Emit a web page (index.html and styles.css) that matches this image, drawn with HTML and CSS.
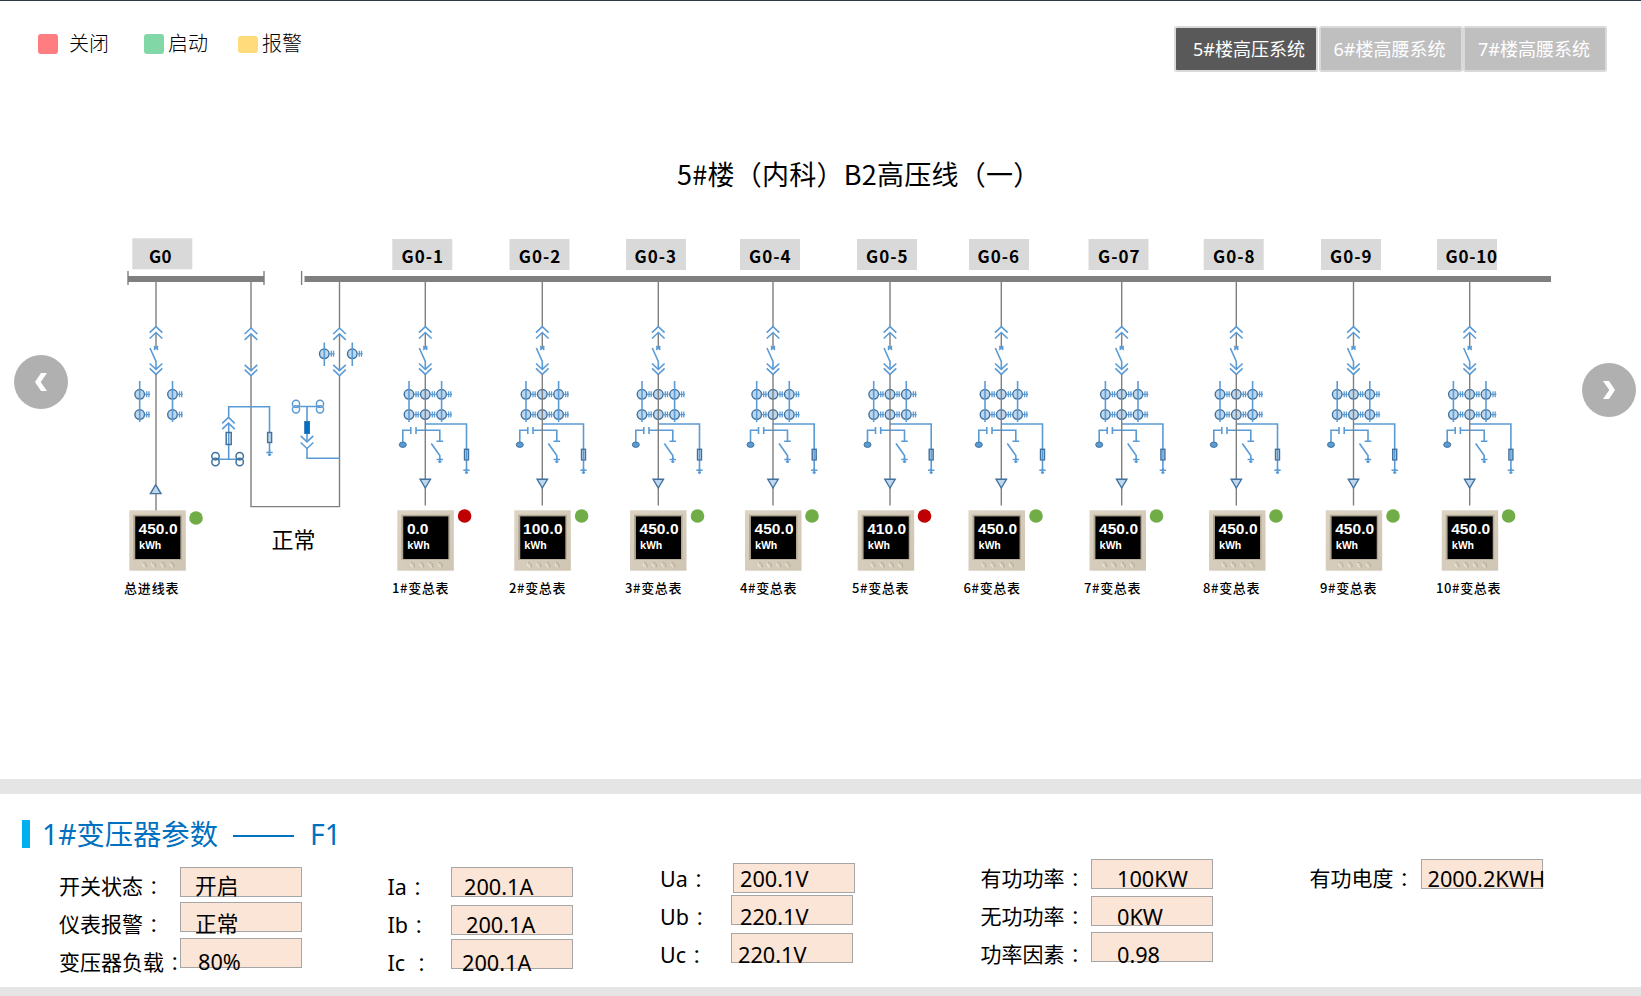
FILE: index.html
```html
<!DOCTYPE html>
<html lang="zh-CN">
<head>
<meta charset="utf-8">
<title>高压系统</title>
<link rel="stylesheet" href="styles.css">
</head>
<body>
<header class="topbar">
  <ul class="legend">
    <li class="legend-item off"><i class="swatch"></i><span>关闭</span></li>
    <li class="legend-item on"><i class="swatch"></i><span>启动</span></li>
    <li class="legend-item alarm"><i class="swatch"></i><span>报警</span></li>
  </ul>
  <nav class="tabs">
    <a class="tab active">5#楼高压系统</a>
    <a class="tab">6#楼高腰系统</a>
    <a class="tab">7#楼高腰系统</a>
  </nav>
</header>

<h1 class="title">5#楼（内科）B2高压线（一）</h1>

<main class="stage">
  <svg class="diagram" viewBox="0 212 1641 567" width="1641" height="567">
    <defs>
      <path id="up" class="b" d="M-6.3 332.7L0 326.7L6.3 332.7M-6.3 338.5L0 332.5L6.3 338.5"/>
      <path id="down" class="b" d="M-6.3 363.5L0 369.3L6.3 363.5M-6.3 368.3L0 374.3L6.3 368.3"/>
      <g id="ct">
        <circle class="f" r="4.8"/>
        <path class="b thin" d="M5 0H10.4M7 -3V3M9.2 -3V3"/>
      </g>
      <g id="ctline">
        <use href="#ct" y="394.3"/><use href="#ct" y="414.6"/>
        <path class="b" d="M0 381V422"/>
      </g>
      <g id="head">
        <path class="g" d="M0 282V327M0 333V347"/>
        <use href="#up"/>
        <path class="b thin" d="M-2 346L2 350M2 346L-2 350M-2.2 348H2.2"/>
        <path class="b" d="M-6 348L0 361.5V369"/>
        <use href="#down"/>
      </g>
      <g id="ground"><path class="b" d="M-3.2 0H3.2M-1.6 2.2H1.6M0 -2V3.6"/></g>
      <g id="feeder">
        <use href="#head"/>
        <use href="#ctline" x="-16.3"/>
        <use href="#ctline" x="16.3"/>
        <use href="#ct" y="394.3"/><use href="#ct" y="414.6"/>
        <path class="b" d="M0 424H41.2V470M-22.5 442V430.3H-14.5M-14.5 427V434M-9.3 427V434M-9.3 430.3H14.5V441.3M11.2 441.3H17.8M6 443.5L14.5 455.5V460"/>
        <ellipse class="dotb" cx="-22.5" cy="444.7" rx="3.5" ry="2.7"/>
        <rect class="f" x="39.2" y="449.3" width="4" height="10.6"/>
        <path class="b thin" d="M41.2 450V460"/>
        <use href="#ground" x="14.5" y="459.5"/>
        <use href="#ground" x="41.2" y="470.3"/>
        <path class="g" d="M0 374V505.5"/>
        <path class="f" d="M-5.2 479.3H5.2L0 488Z"/>
      </g>
      <linearGradient id="casing" x1="0" y1="0" x2="1" y2="1">
        <stop offset="0" stop-color="#dcd3c3"/><stop offset="1" stop-color="#cfc5b3"/>
      </linearGradient>
      <g id="meter">
        <rect x="0" y="510.3" width="56.5" height="60.4" fill="url(#casing)"/>
        <path d="M4 514.7H52.5V559.7H4Z" fill="#b3a894"/>
        <path d="M5.6 516H51V559H5.6Z" fill="#8a857c"/>
        <rect x="6" y="516.5" width="45" height="42.5" fill="#000"/>
        <path class="key" d="M14 562.5c3-.5 4 4 2.500 5M23.200 562.500c3-.5 4 4 2.500 5M32.500 562.500c3-.5 4 4 2.500 5M41.700 562.500c3-.5 4 4 2.500 5"/>
        <path class="glint" d="M13 563.500q0 3 3 4M22.200 563.500q0 3 3 4M31.500 563.500q0 3 3 4M40.700 563.500q0 3 3 4"/>
      </g>
    </defs>

    <!-- cabinet plates -->
    <g class="plate">
      <rect x="132.300" y="238.300" width="60" height="31"/>
      <rect x="392.300" y="239" width="60" height="31"/>
      <rect x="509.500" y="239" width="60" height="31"/>
      <rect x="626" y="239" width="60" height="31"/>
      <rect x="740" y="239" width="60" height="31"/>
      <rect x="857" y="239" width="60" height="31"/>
      <rect x="969" y="239" width="60" height="31"/>
      <rect x="1088.500" y="239" width="60" height="31"/>
      <rect x="1203.700" y="239" width="60" height="31"/>
      <rect x="1321" y="239" width="60" height="31"/>
      <rect x="1437" y="239" width="60" height="31"/>
    </g>
    <g class="plate-text">
      <text x="149" y="262.500" textLength="22.500">G0</text>
      <text x="401.500" y="262.500" textLength="41.500">G0-1</text>
      <text x="518.800" y="262.500" textLength="41.500">G0-2</text>
      <text x="634.500" y="262.500" textLength="41.500">G0-3</text>
      <text x="749" y="262.500" textLength="41.500">G0-4</text>
      <text x="866" y="262.500" textLength="41.500">G0-5</text>
      <text x="977.500" y="262.500" textLength="41.500">G0-6</text>
      <text x="1098" y="262.500" textLength="41.500">G-07</text>
      <text x="1213" y="262.500" textLength="41.500">G0-8</text>
      <text x="1330" y="262.500" textLength="41.500">G0-9</text>
      <text x="1445.500" y="262.500" textLength="51.500">G0-10</text>
    </g>

    <!-- busbars -->
    <path class="bus" d="M128 279H264M304.500 279H1551"/>
    <path class="g" d="M128 271V285M264 271V285M301.600 271V285"/>

    <!-- incoming line G0 -->
    <use href="#head" x="156"/>
    <use href="#ctline" x="139.700"/>
    <use href="#ctline" x="172.500"/>
    <path class="f" d="M150.400 493.600H161L155.700 484.600Z"/>
    <path class="g" d="M156 374V484.500M156 493.600V511"/>

    <!-- bus tie loop -->
    <path class="g" d="M251 282V328M251 334V371M251 376V506.600H339.500V376M339.500 371V334M339.500 328V282"/>
    <use href="#up" x="251" y="1.300"/><use href="#down" x="251" y="1.300"/>
    <use href="#up" x="339.500" y="1.300"/><use href="#down" x="339.500" y="1.300"/>
    <use href="#ct" x="324.300" y="353.800"/><use href="#ct" x="352.300" y="353.800"/>
    <path class="b" d="M324.300 342.500V366M352.300 342.500V366"/>

    <path class="b" d="M228.700 417.500V406.700H269.500V452M228.700 423V459.200H216M228.700 459.200H240"/>
    <use href="#up" x="228.500" y="90.700"/>
    <g class="hollow dark">
      <rect x="226.200" y="432.500" width="5" height="12"/>
      <circle cx="215.500" cy="456.200" r="3.700"/><circle cx="215.500" cy="462" r="3.700"/>
      <circle cx="239.700" cy="456.200" r="3.700"/><circle cx="239.700" cy="462" r="3.700"/>
    </g>
    <rect class="f" x="267.600" y="432.500" width="4" height="10"/>
    <use href="#ground" x="269.500" y="452.500"/>

    <path class="b" d="M297 406.500H320M307 406.500V442M307 448V458.300H339.500"/>
    <g class="hollow">
      <circle cx="296" cy="403.800" r="3.600"/><circle cx="296" cy="409.300" r="3.600"/>
      <circle cx="320" cy="403.800" r="3.600"/><circle cx="320" cy="409.300" r="3.600"/>
    </g>
    <rect class="fuse" x="304.700" y="421.500" width="4.800" height="12"/>
    <path class="b" d="M300.700 435.800L307 441.800L313.300 435.800M300.700 442.500L307 448.500L313.300 442.500"/>

    <!-- outgoing feeders -->
    <use href="#feeder" x="425.300"/>
    <use href="#feeder" x="542.300"/>
    <use href="#feeder" x="658.300"/>
    <use href="#feeder" x="773"/>
    <use href="#feeder" x="890"/>
    <use href="#feeder" x="1001.300"/>
    <use href="#feeder" x="1121.700"/>
    <use href="#feeder" x="1236.300"/>
    <use href="#feeder" x="1353.500"/>
    <use href="#feeder" x="1469.700"/>

    <!-- meters -->
    <use href="#meter" x="129.300"/>
    <use href="#meter" x="397.300"/>
    <use href="#meter" x="514.300"/>
    <use href="#meter" x="630"/>
    <use href="#meter" x="745"/>
    <use href="#meter" x="857.700"/>
    <use href="#meter" x="968.500"/>
    <use href="#meter" x="1089.500"/>
    <use href="#meter" x="1209"/>
    <use href="#meter" x="1325.700"/>
    <use href="#meter" x="1441.700"/>
    <g class="reading">
      <text x="138.500" y="534" textLength="39">450.0</text>
      <text x="406.900" y="534" textLength="21.500">0.0</text>
      <text x="523" y="534" textLength="39.500">100.0</text>
      <text x="639.500" y="534" textLength="39">450.0</text>
      <text x="754.500" y="534" textLength="39">450.0</text>
      <text x="867.200" y="534" textLength="39">410.0</text>
      <text x="978" y="534" textLength="39">450.0</text>
      <text x="1099" y="534" textLength="39">450.0</text>
      <text x="1218.500" y="534" textLength="39">450.0</text>
      <text x="1335.200" y="534" textLength="39">450.0</text>
      <text x="1451.200" y="534" textLength="39">450.0</text>
    </g>
    <g class="unit">
      <text x="139" y="549">kWh</text>
      <text x="407.300" y="549">kWh</text>
      <text x="524.300" y="549">kWh</text>
      <text x="640" y="549">kWh</text>
      <text x="755" y="549">kWh</text>
      <text x="867.700" y="549">kWh</text>
      <text x="978.500" y="549">kWh</text>
      <text x="1099.500" y="549">kWh</text>
      <text x="1219" y="549">kWh</text>
      <text x="1335.700" y="549">kWh</text>
      <text x="1451.700" y="549">kWh</text>
    </g>

    <!-- status lamps -->
    <g class="lamp">
      <circle cx="196" cy="518" r="6.800"/>
      <circle class="stop" cx="464.600" cy="516" r="6.800"/>
      <circle cx="581.600" cy="516" r="6.800"/>
      <circle cx="697.500" cy="516" r="6.800"/>
      <circle cx="812" cy="516" r="6.800"/>
      <circle class="stop" cx="924.500" cy="516" r="6.800"/>
      <circle cx="1036" cy="516" r="6.800"/>
      <circle cx="1156.500" cy="516" r="6.800"/>
      <circle cx="1276" cy="516" r="6.800"/>
      <circle cx="1393" cy="516" r="6.800"/>
      <circle cx="1508.600" cy="516" r="6.800"/>
    </g>

    <g class="caption">
      <text x="124" y="593" textLength="54.500">总进线表</text>
      <text x="392" y="593" textLength="56.500">1#变总表</text>
      <text x="509" y="593" textLength="56.500">2#变总表</text>
      <text x="625" y="593" textLength="56.500">3#变总表</text>
      <text x="740" y="593" textLength="56.500">4#变总表</text>
      <text x="852" y="593" textLength="56.500">5#变总表</text>
      <text x="963.500" y="593" textLength="56.500">6#变总表</text>
      <text x="1084" y="593" textLength="56.500">7#变总表</text>
      <text x="1203" y="593" textLength="56.500">8#变总表</text>
      <text x="1320" y="593" textLength="56.500">9#变总表</text>
      <text x="1436" y="593" textLength="64.500">10#变总表</text>
    </g>
    <text class="state" x="271.500" y="548" textLength="44">正常</text>
  </svg>
  <button class="pager prev" aria-label="上一页">
    <svg viewBox="0 0 54 54" width="54" height="54"><path d="M21 27L27 18H33L26.700 27L33 36H27Z"/></svg>
  </button>
  <button class="pager next" aria-label="下一页">
    <svg viewBox="0 0 54 54" width="54" height="54"><path d="M33 27L27 18H21L27.300 27L21 36H27Z"/></svg>
  </button>
</main>

<section class="panel">
  <h2 class="panel-title"><span>1#变压器参数</span><i class="rule"></i><span>F1</span></h2>
  <div class="groups">
    <div class="group status">
      <div class="row"><span class="label">开关状态<b>：</b></span><div class="value"><span>开启</span></div></div>
      <div class="row"><span class="label">仪表报警<b>：</b></span><div class="value"><span>正常</span></div></div>
      <div class="row"><span class="label">变压器负载<b>：</b></span><div class="value"><span>80%</span></div></div>
    </div>
    <div class="group current">
      <div class="row"><span class="label">Ia<b>：</b></span><div class="value"><span>200.1A</span></div></div>
      <div class="row"><span class="label">Ib<b>：</b></span><div class="value"><span>200.1A</span></div></div>
      <div class="row"><span class="label">Ic <b>：</b></span><div class="value"><span>200.1A</span></div></div>
    </div>
    <div class="group voltage">
      <div class="row"><span class="label">Ua<b>：</b></span><div class="value"><span>200.1V</span></div></div>
      <div class="row"><span class="label">Ub<b>：</b></span><div class="value"><span>220.1V</span></div></div>
      <div class="row"><span class="label">Uc<b>：</b></span><div class="value"><span>220.1V</span></div></div>
    </div>
    <div class="group power">
      <div class="row"><span class="label">有功功率<b>：</b></span><div class="value"><span>100KW</span></div></div>
      <div class="row"><span class="label">无功功率<b>：</b></span><div class="value"><span>0KW</span></div></div>
      <div class="row"><span class="label">功率因素<b>：</b></span><div class="value"><span>0.98</span></div></div>
    </div>
    <div class="group energy">
      <div class="row"><span class="label">有功电度<b>：</b></span><div class="value"><span>2000.2KWH</span></div></div>
    </div>
  </div>
</section>
</body>
</html>
```
FILE: styles.css
```css
* { box-sizing: border-box; }

body {
  margin: 0;
  width: 1641px;
  height: 996px;
  overflow: hidden;
  border-top: 1px solid #2c3a47;
  background: #fff;
  color: #000;
  font-family: "Noto Sans", "Noto Sans CJK SC", sans-serif;
  font-weight: 400;
}

/* top bar */
.topbar {
  display: flex;
  justify-content: space-between;
  height: 140px;
  padding: 25px 34px 0 38px;
}
.legend {
  display: flex;
  align-items: center;
  height: 36px;
  margin: 0;
  padding: 0;
  list-style: none;
  font-size: 20px;
  font-weight: 300;
}
.legend-item { display: flex; align-items: center; }
.legend-item span { padding-bottom: 3px; }
.swatch { width: 20px; height: 20px; border-radius: 3px; }
.off { margin-right: 35px; }
.off .swatch { margin-right: 11px; background: #ff7c80; }
.on { margin-right: 30px; }
.on .swatch { margin-right: 4px; background: #81d8a6; }
.alarm .swatch { height: 17px; margin-right: 4px; background: #ffdb7b; }

.tabs { display: flex; height: 46px; gap: 0.5px; }
.tab {
  width: 144px;
  border: 2px solid #d9d9d9;
  border-radius: 3px;
  background: #bfbfbf;
  color: #fff;
  font-size: 18px;
  line-height: 42px;
  padding-left: 13px;
  white-space: nowrap;
}
.tab.active { background: #595959; padding-left: 17px; }

.title {
  height: 71px;
  margin: 0;
  padding: 13px 0 0 677px;
  font-family: "Noto Sans CJK SC", sans-serif;
  font-size: 27px;
  font-weight: 400;
  line-height: 40px;
  letter-spacing: 0.25px;
  white-space: nowrap;
}

/* one-line diagram */
.stage { position: relative; height: 567px; }
.diagram { display: block; }
.diagram text { font-family: "Noto Sans CJK SC", sans-serif; }
.g { fill: none; stroke: #7f7f7f; stroke-width: 1.4; }
.bus { fill: none; stroke: #7f7f7f; stroke-width: 6; }
.b { fill: none; stroke: #5b9bd5; stroke-width: 1.6; }
.thin { stroke-width: 1.3; }
.f { fill: #bdd7ee; stroke: #41719c; stroke-width: 1.4; }
.dotb { fill: #5b9bd5; stroke: #41719c; }
.hollow { fill: none; stroke: #5b9bd5; stroke-width: 1.5; }
.hollow.dark { stroke: #41719c; }
.fuse { fill: #0070c0; stroke: #2e75b6; }
.plate { fill: #d9d9d9; }
.plate-text { font-size: 17px; font-weight: 700; }
.key { fill: none; stroke: #aea390; stroke-width: 0.9; }
.glint { fill: none; stroke: #f1ebdf; }
.reading { font-size: 15.5px; font-weight: 700; fill: #fff; }
.diagram .reading text { font-family: "Liberation Sans", sans-serif; }
.unit { font-size: 10px; font-weight: 700; fill: #fff; }
.diagram .unit text { font-family: "Noto Sans", sans-serif; }
.lamp { fill: #70ad47; }
.lamp .stop { fill: #c00000; }
.caption { font-size: 13px; font-weight: 500; }
.state { font-size: 22px; }

.pager {
  position: absolute;
  width: 54px;
  height: 54px;
  padding: 0;
  border: 0;
  border-radius: 50%;
  background: #b0b0b0;
}
.pager svg { display: block; fill: #fff; }
.prev { left: 14px; top: 143px; }
.next { left: 1582px; top: 151px; }

/* parameter panel */
.panel {
  height: 217px;
  border-top: 15px solid #e5e5e5;
  border-bottom: 9px solid #e5e5e5;
}
.panel-title {
  display: flex;
  align-items: center;
  height: 28px;
  margin: 26px 0 0 22px;
  padding-left: 12px;
  border-left: 8px solid #00b0f0;
  color: #0070c0;
  font-size: 28.3px;
  font-weight: 400;
  line-height: 28px;
  white-space: nowrap;
}
.rule { width: 61px; height: 2px; margin: 3px 16px 0 15px; background: #0070c0; }

.groups { display: flex; align-items: flex-start; padding: 12px 0 0 59px; }
.group { flex: none; font-size: 21.5px; }
.status, .current { padding-top: 8px; }
.status { width: 328.500px; }
.current { width: 272.500px; }
.voltage { width: 320.500px; }
.power { width: 329px; }
.row { display: flex; height: 38px; }
.label { flex: none; line-height: 37px; white-space: pre; }
.label b { display: inline-block; width: 21px; padding-left: 6px; font-size: 19px; font-weight: 400; line-height: 20px; }
.status, .power, .energy { font-size: 21px; }
.status .label { width: 121px; }
.current .label { width: 63.500px; line-height: 38px; }
.voltage .label { width: 71px; }
.power .label { width: 110.500px; line-height: 36px; }
.energy .label { width: 111px; line-height: 36px; }

.value {
  flex: none;
  width: 122px;
  height: 30px;
  margin-top: var(--shift);
  border: 1px solid #a6a6a6;
  background: #fbe5d6;
  font-size: 21.7px;
  white-space: nowrap;
}
.value span { display: block; margin-top: calc(-1px - var(--shift)); padding-left: 14px; line-height: 37px; }
.status .value span { line-height: 36px; }
.current .value span { line-height: 38px; }
.status .row:nth-child(1), .current .row:nth-child(1) { --shift: -1px; }
.status .row:nth-child(2) { --shift: -4px; }
.status .row:nth-child(3) { --shift: -6px; }
.current .row:nth-child(2) { --shift: -1px; }
.current .row:nth-child(3) { --shift: -5px; }
.voltage .row:nth-child(1) { --shift: 3px; }
.voltage .row:nth-child(1) .value { margin-left: 2px; }
.voltage .row:nth-child(2) { --shift: -3px; }
.voltage .row:nth-child(3) { --shift: -3px; }
.power .row:nth-child(1), .energy .row { --shift: -1px; }
.power .row:nth-child(2) { --shift: -2px; }
.power .row:nth-child(3) { --shift: -4px; }
.status .row:nth-child(3) .value span { padding-left: 17px; }
.current .value span { padding-left: 12px; }
.current .row:nth-child(2) .value span { padding-left: 14px; }
.current .row:nth-child(3) .value span { padding-left: 10px; }
.voltage .value span { padding-left: 8px; }
.voltage .row:nth-child(1) .value span { padding-left: 6px; }
.voltage .row:nth-child(3) .value span { padding-left: 6px; }
.power .value span { padding-left: 25px; }
.energy .value span { padding-left: 6px; }
```
